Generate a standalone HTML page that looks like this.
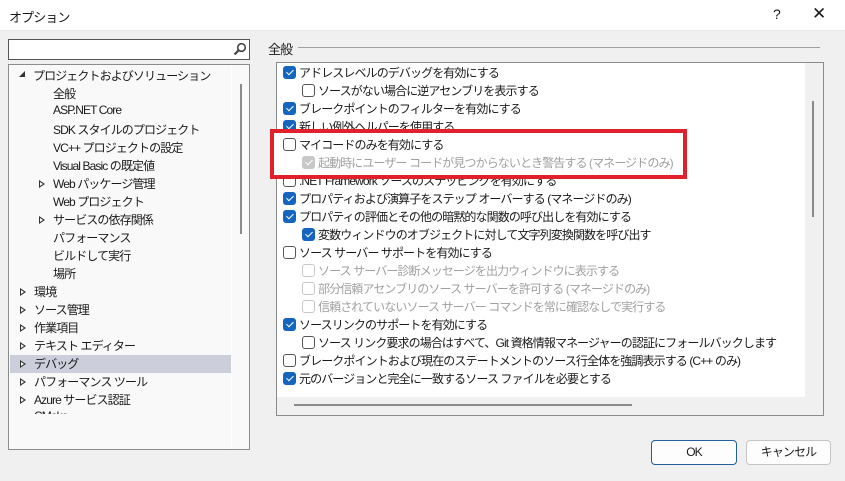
<!DOCTYPE html>
<html><head><meta charset="utf-8"><style>
*{margin:0;padding:0;box-sizing:border-box}
body{width:845px;height:481px;background:#f0f0f0;font-family:"Liberation Sans","Noto Sans CJK JP",sans-serif;font-size:12px;color:#1a1a1a;position:relative;overflow:hidden;letter-spacing:-0.9px}
.a{position:absolute;white-space:nowrap}
.title{left:0;top:0;width:845px;height:31px;background:#fff;border-bottom:1px solid #e8e8e8}
.cb{position:absolute;width:13px;height:13px;border:1px solid #555;border-radius:3px;background:#fff}
.cb.on{background:#1565c0;border-color:#1565c0}
.cb.on::after{content:"";position:absolute;left:4px;top:1px;width:3px;height:6px;border:solid #fff;border-width:0 1.3px 1.3px 0;transform:rotate(45deg)}
.cb.dis{border-color:#c8c8c8}
.cb.dison{background:#c8c8c8;border-color:#c8c8c8}
.cb.dison::after{content:"";position:absolute;left:4px;top:1px;width:3px;height:6px;border:solid #fff;border-width:0 1.3px 1.3px 0;transform:rotate(45deg)}
.g{color:#a0a0a0}
.tri{position:absolute;width:0;height:0;border-top:4px solid transparent;border-bottom:4px solid transparent;border-left:6px solid #333}
.tri::after{content:"";position:absolute;left:-5px;top:-2px;border-top:2px solid transparent;border-bottom:2px solid transparent;border-left:3px solid #fff}
.btn{position:absolute;height:25px;border:1px solid #c4c4c4;border-radius:4px;background:#fdfdfd;text-align:center;line-height:23px}
</style></head><body>
<div class="a title"></div>
<div class="a" style="left:9px;top:7px;font-size:13px">オプション</div>
<div class="a" style="left:773px;top:6px;font-size:14px">?</div>
<div class="a" style="left:812px;top:4px;font-size:17px;letter-spacing:0">✕</div>

<!-- search -->
<div class="a" style="left:8px;top:39px;width:242px;height:21px;border:1px solid #555;background:#fff"></div>
<svg class="a" style="left:233px;top:42px" width="14" height="14" viewBox="0 0 14 14"><circle cx="8.5" cy="5.5" r="3.8" fill="none" stroke="#444" stroke-width="1.6"/><path d="M5.8 8.2 L1.5 12.5" stroke="#444" stroke-width="2.2"/></svg>

<!-- tree -->
<div class="a" style="left:8px;top:64px;width:242px;height:386px;border:1px solid #8c8c8c;background:#f9f9f9;overflow:hidden">
 <div class="a" style="left:1px;top:290px;width:221px;height:18px;background:#cccedb"></div>
 <div class="a" style="left:231px;top:19px;width:2px;height:150px;background:#8a8a8a"></div>
 <div class="a" style="left:222px;top:0;width:1px;height:386px;background:#fff"></div>
</div>
<div class="a" style="left:19px;top:71px;width:0;height:0;border-left:6px solid transparent;border-bottom:6px solid #333"></div>
<div class="a" style="left:33px;top:67px">プロジェクトおよびソリューション</div>
<div class="a" style="left:53px;top:85px">全般</div>
<div class="a" style="left:53px;top:103px">ASP.NET Core</div>
<div class="a" style="left:53px;top:121px">SDK スタイルのプロジェクト</div>
<div class="a" style="left:53px;top:139px">VC++ プロジェクトの設定</div>
<div class="a" style="left:53px;top:157px">Visual Basic の既定値</div>
<div class="tri" style="left:39px;top:180px"></div><div class="a" style="left:53px;top:175px">Web パッケージ管理</div>
<div class="a" style="left:53px;top:193px">Web プロジェクト</div>
<div class="tri" style="left:39px;top:216px"></div><div class="a" style="left:53px;top:211px">サービスの依存関係</div>
<div class="a" style="left:53px;top:229px">パフォーマンス</div>
<div class="a" style="left:53px;top:247px">ビルドして実行</div>
<div class="a" style="left:53px;top:265px">場所</div>
<div class="tri" style="left:20px;top:288px"></div><div class="a" style="left:34px;top:283px">環境</div>
<div class="tri" style="left:20px;top:306px"></div><div class="a" style="left:34px;top:301px">ソース管理</div>
<div class="tri" style="left:20px;top:324px"></div><div class="a" style="left:34px;top:319px">作業項目</div>
<div class="tri" style="left:20px;top:342px"></div><div class="a" style="left:34px;top:337px">テキスト エディター</div>
<div class="tri" style="left:20px;top:360px"></div><div class="a" style="left:34px;top:355px">デバッグ</div>
<div class="tri" style="left:20px;top:378px"></div><div class="a" style="left:34px;top:373px">パフォーマンス ツール</div>
<div class="tri" style="left:20px;top:396px"></div><div class="a" style="left:34px;top:391px">Azure サービス認証</div>
<div class="a" style="left:9px;top:409px;width:240px;height:40px;overflow:hidden"><div class="tri" style="left:11px;top:5px"></div><div class="a" style="left:25px;top:0">CMake</div></div>
<div class="a" style="left:9px;top:414px;width:221px;height:35px;background:#f9f9f9"></div>

<!-- right -->
<div class="a" style="left:268px;top:39px;font-size:13px">全般</div>
<div class="a" style="left:298px;top:47px;width:522px;height:1px;background:#a0a0a0"></div>
<div class="a" style="left:276px;top:62px;width:548px;height:354px;border:1px solid #8c8c8c;background:#f0f0f0"></div>
<div class="a" style="left:277px;top:63px;width:528px;height:334px;background:#fff"></div>
<div class="a" style="left:812px;top:101px;width:2px;height:116px;background:#8a8a8a"></div>
<div class="a" style="left:294px;top:404px;width:338px;height:2px;background:#8a8a8a"></div>

<div class="cb on" style="left:283px;top:66px"></div><div class="a" style="left:299px;top:64px">アドレスレベルのデバッグを有効にする</div>
<div class="cb" style="left:302px;top:84px"></div><div class="a" style="left:318px;top:82px">ソースがない場合に逆アセンブリを表示する</div>
<div class="cb on" style="left:283px;top:102px"></div><div class="a" style="left:299px;top:100px">ブレークポイントのフィルターを有効にする</div>
<div class="cb on" style="left:283px;top:120px"></div><div class="a" style="left:299px;top:118px">新しい例外ヘルパーを使用する</div>
<div class="cb" style="left:283px;top:174px"></div><div class="a" style="left:299px;top:172px">.NET Framework ソースのステッピングを有効にする</div>
<div class="cb on" style="left:283px;top:192px"></div><div class="a" style="left:299px;top:190px">プロパティおよび演算子をステップ オーバーする (マネージドのみ)</div>
<div class="cb on" style="left:283px;top:210px"></div><div class="a" style="left:299px;top:208px">プロパティの評価とその他の暗黙的な関数の呼び出しを有効にする</div>
<div class="cb on" style="left:302px;top:228px"></div><div class="a" style="left:318px;top:226px">変数ウィンドウのオブジェクトに対して文字列変換関数を呼び出す</div>
<div class="cb" style="left:283px;top:246px"></div><div class="a" style="left:299px;top:244px">ソース サーバー サポートを有効にする</div>
<div class="cb dis" style="left:302px;top:264px"></div><div class="a g" style="left:318px;top:262px">ソース サーバー診断メッセージを出力ウィンドウに表示する</div>
<div class="cb dis" style="left:302px;top:282px"></div><div class="a g" style="left:318px;top:280px">部分信頼アセンブリのソース サーバーを許可する (マネージドのみ)</div>
<div class="cb dis" style="left:302px;top:300px"></div><div class="a g" style="left:318px;top:298px">信頼されていないソース サーバー コマンドを常に確認なしで実行する</div>
<div class="cb on" style="left:283px;top:318px"></div><div class="a" style="left:299px;top:316px">ソースリンクのサポートを有効にする</div>
<div class="cb" style="left:302px;top:336px"></div><div class="a" style="left:318px;top:334px">ソース リンク要求の場合はすべて、Git 資格情報マネージャーの認証にフォールバックします</div>
<div class="cb" style="left:283px;top:354px"></div><div class="a" style="left:299px;top:352px">ブレークポイントおよび現在のステートメントのソース行全体を強調表示する (C++ のみ)</div>
<div class="cb on" style="left:283px;top:372px"></div><div class="a" style="left:299px;top:370px">元のバージョンと完全に一致するソース ファイルを必要とする</div>
<div class="a" style="left:277px;top:388px;width:528px;height:9px;background:#fff"></div>

<!-- red highlight -->
<div class="a" style="left:270px;top:129px;width:417px;height:50px;border:4px solid #e0202a;background:#fff"></div>
<div class="cb" style="left:283px;top:138px"></div><div class="a" style="left:299px;top:136px">マイコードのみを有効にする</div>
<div class="cb dison" style="left:302px;top:156px"></div><div class="a g" style="left:318px;top:154px">起動時にユーザー コードが見つからないとき警告する (マネージドのみ)</div>

<div class="btn" style="left:651px;top:440px;width:86px;border-color:#1f5f9f;background:#fdfdfd">OK</div>
<div class="btn" style="left:746px;top:440px;width:85px">キャンセル</div>
</body></html>
